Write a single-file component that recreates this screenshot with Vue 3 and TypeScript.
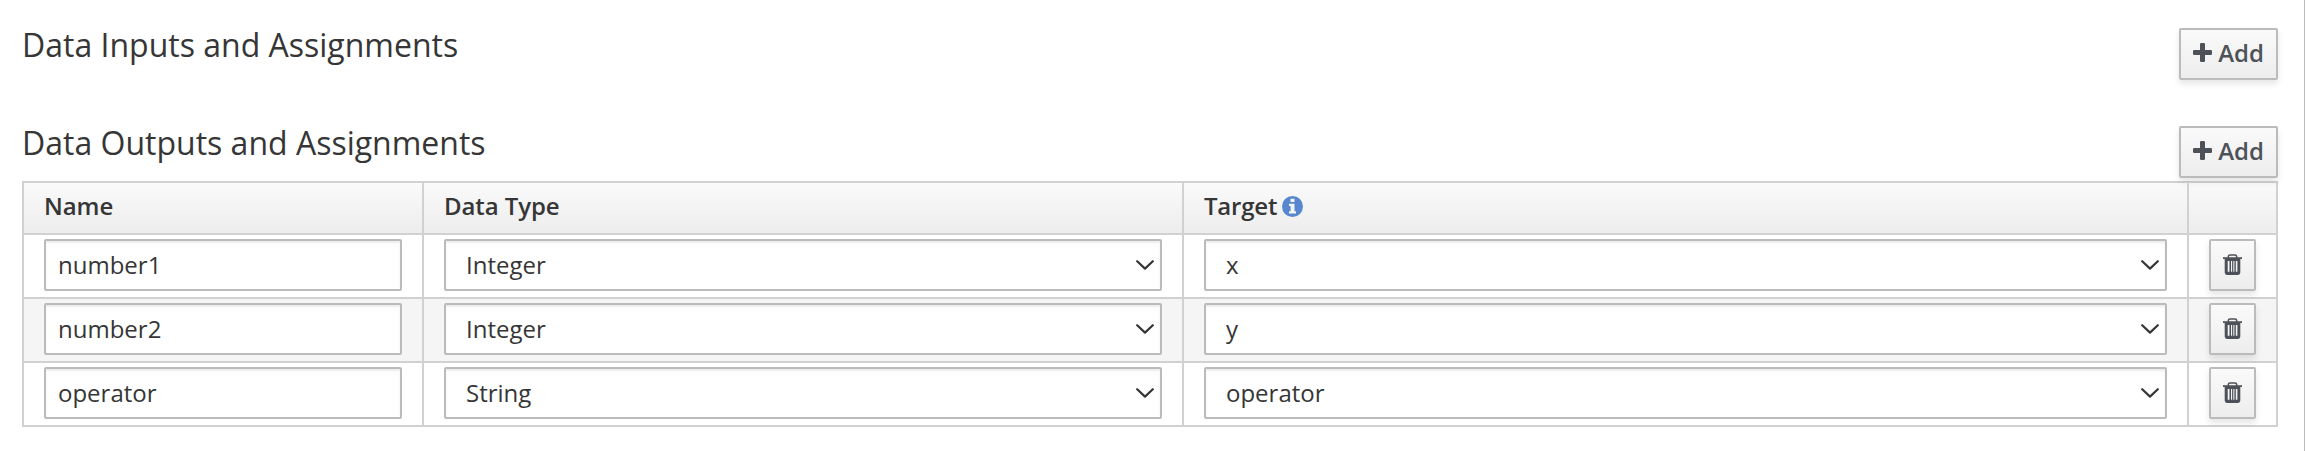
<script setup lang="ts">
import { reactive } from 'vue'

interface Assignment {
  name: string
  dataType: string
  target: string
}

const dataTypes = ['Integer', 'String']
const targets = ['x', 'y', 'operator']

const inputs = reactive<Assignment[]>([])
const outputs = reactive<Assignment[]>([
  { name: 'number1', dataType: 'Integer', target: 'x' },
  { name: 'number2', dataType: 'Integer', target: 'y' },
  { name: 'operator', dataType: 'String', target: 'operator' },
])

function add(list: Assignment[]) {
  list.push({ name: '', dataType: 'String', target: 'x' })
}
</script>

<template>
  <main class="panel">
    <section class="heading first">
      <h3>Data Inputs and Assignments</h3>
      <button class="btn add" type="button" @click="add(inputs)">
        <svg class="plus" viewBox="0 0 19 19"><path d="M8.2 0h2.6q1.2 0 1.2 1.2V7h5.8Q19 7 19 8.2v2.6q0 1.2-1.2 1.2H12v5.8q0 1.2-1.2 1.2H8.2Q7 19 7 17.8V12H1.2Q0 12 0 10.8V8.2Q0 7 1.2 7H7V1.2Q7 0 8.2 0z" /></svg>
        <span>Add</span>
      </button>
    </section>

    <section class="heading second">
      <h3>Data Outputs and Assignments</h3>
      <button class="btn add" type="button" @click="add(outputs)">
        <svg class="plus" viewBox="0 0 19 19"><path d="M8.2 0h2.6q1.2 0 1.2 1.2V7h5.8Q19 7 19 8.2v2.6q0 1.2-1.2 1.2H12v5.8q0 1.2-1.2 1.2H8.2Q7 19 7 17.8V12H1.2Q0 12 0 10.8V8.2Q0 7 1.2 7H7V1.2Q7 0 8.2 0z" /></svg>
        <span>Add</span>
      </button>
    </section>

    <div class="table">
      <div class="row head">
        <div class="cell">Name</div>
        <div class="cell">Data Type</div>
        <div class="cell target">
          Target
          <svg class="info" viewBox="0 0 21 21">
            <circle cx="10.5" cy="10.5" r="10.5" />
            <path d="M8.5 2.7h4v3.2h-4zM7 7.7h5.5v7.6H14v2.2H7v-2.2h1.6V9.9H7z" />
          </svg>
        </div>
        <div class="cell"></div>
      </div>
      <div v-for="(row, i) in outputs" :key="i" class="row">
        <div class="cell"><input v-model="row.name" class="control" type="text" /></div>
        <div class="cell">
          <div class="picker">
            <select v-model="row.dataType" class="control">
              <option v-for="t in dataTypes" :key="t">{{ t }}</option>
            </select>
            <svg class="chevron" viewBox="0 0 18 10"><path d="M1.2 1.2 9 8.6l7.8-7.4" /></svg>
          </div>
        </div>
        <div class="cell">
          <div class="picker">
            <select v-model="row.target" class="control">
              <option v-for="t in targets" :key="t">{{ t }}</option>
            </select>
            <svg class="chevron" viewBox="0 0 18 10"><path d="M1.2 1.2 9 8.6l7.8-7.4" /></svg>
          </div>
        </div>
        <div class="cell">
          <button class="btn remove" type="button" aria-label="Delete" @click="outputs.splice(i, 1)">
            <svg class="trash" viewBox="0 0 19 21">
              <path class="handle" d="M5.3 4V2.6Q5.3.9 7 .9h5q1.7 0 1.7 1.7V4" />
              <path fill-rule="evenodd" d="M0 3.3h19v1.6h-1.7v13.6q0 2.4-2.3 2.4H4q-2.3 0-2.3-2.4V4.9H0zM4.7 7v10.8h1.8V7zM8 7v10.8h1.1V7zM10.3 7v10.8h1.1V7zM12.8 7v10.8h1.6V7z" />
            </svg>
          </button>
        </div>
      </div>
    </div>
  </main>
</template>

<style>
body {
  margin: 0;
  background: #fff;
}
</style>

<style scoped>
.panel {
  box-sizing: border-box;
  width: 2305px;
  height: 451px;
  padding: 28px 26px 0 22px;
  border-right: 1px solid #bbb;
  overflow: hidden;
  background: #fff;
  color: #363636;
  font: 24px/40px 'Open Sans', 'Noto Sans', sans-serif;
}

.heading {
  display: flex;
  justify-content: space-between;
  align-items: flex-start;
}

.heading.first {
  height: 98px;
}

.heading.second {
  height: 55px;
}

h3 {
  margin: 0;
  font-size: 32px;
  font-weight: 400;
  line-height: 34px;
}

.btn {
  box-sizing: border-box;
  display: flex;
  align-items: center;
  justify-content: center;
  height: 52px;
  margin: 0;
  padding: 0;
  border: 2px solid #bbb;
  border-radius: 2px;
  background: linear-gradient(#fafafa, #ededed);
  box-shadow: 0 4px 6px rgba(3, 3, 3, 0.1);
  color: #4d5258;
  font: 600 24px/40px 'Open Sans', 'Noto Sans', sans-serif;
}

.add {
  width: 99px;
  gap: 6px;
  padding-bottom: 2px;
}

.plus {
  width: 19px;
  height: 19px;
  margin-bottom: 1px;
  fill: currentColor;
}

.remove {
  width: 47px;
}

.trash {
  width: 19px;
  height: 21px;
  margin-bottom: 1px;
  fill: currentColor;
}

.handle {
  fill: none;
  stroke: currentColor;
  stroke-width: 1.5;
}

.table {
  border: 2px solid #d1d1d1;
  border-bottom: 0;
}

.row {
  box-sizing: border-box;
  display: grid;
  grid-template-columns: 400px 760px 1005px 1fr;
  height: 64px;
  border-bottom: 2px solid #d1d1d1;
}

.row:nth-child(odd) {
  background: #f5f5f5;
}

.row.head {
  height: 52px;
  background: linear-gradient(#fafafa, #ededed);
  font-weight: 600;
  letter-spacing: -0.08px;
}

.cell {
  padding: 4px 20px 0;
  border-right: 2px solid #d1d1d1;
}

.cell:last-child {
  border-right: 0;
}

.head .cell {
  display: flex;
  align-items: center;
  gap: 5px;
  padding: 0 20px 4px;
}

.head .target {
  letter-spacing: -0.2px;
}

.info {
  width: 21px;
  height: 21px;
}

.info circle {
  fill: #5687cf;
}

.info path {
  fill: #f5f5f5;
}

.control {
  box-sizing: border-box;
  display: block;
  width: 100%;
  height: 52px;
  margin: 0;
  padding: 0 12px 2px;
  border: 2px solid #bbb;
  border-radius: 2px;
  outline: 0;
  background: #fff;
  box-shadow: inset 0 2px 2px rgba(3, 3, 3, 0.075);
  color: #363636;
  font: 24px/40px 'Open Sans', 'Noto Sans', sans-serif;
  appearance: none;
}

select.control {
  padding: 0 40px 0 20px;
}

.picker {
  position: relative;
}

.chevron {
  position: absolute;
  top: 21px;
  right: 8px;
  width: 18px;
  height: 10px;
  fill: none;
  stroke: #363636;
  stroke-width: 2.2;
  stroke-linecap: round;
  stroke-linejoin: round;
  pointer-events: none;
}
</style>
